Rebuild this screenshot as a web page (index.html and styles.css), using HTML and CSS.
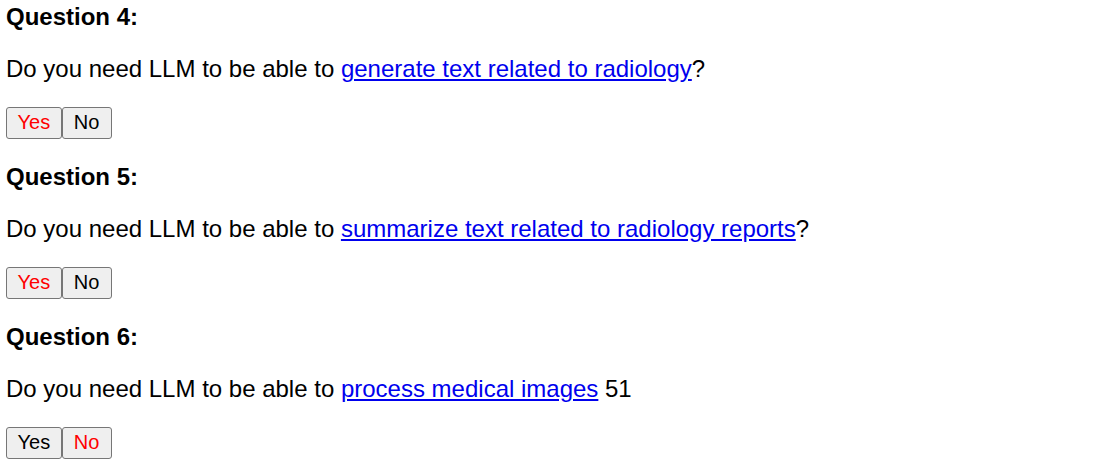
FILE: index.html
```html
<!DOCTYPE html>
<html>
<head>
<meta charset="utf-8">
<link rel="stylesheet" href="styles.css">
</head>
<body>
<div class="quiz">
  <section class="question">
    <p class="title">Question 4:</p>
    <p class="text">Do you need LLM to be able to <a href="#">generate text related to radiology</a>?</p>
    <div class="answers"><button class="btn selected">Yes</button><button class="btn">No</button></div>
  </section>
  <section class="question">
    <p class="title">Question 5:</p>
    <p class="text">Do you need LLM to be able to <a href="#">summarize text related to radiology reports</a>?</p>
    <div class="answers"><button class="btn selected">Yes</button><button class="btn">No</button></div>
  </section>
  <section class="question">
    <p class="title">Question 6:</p>
    <p class="text">Do you need LLM to be able to <a href="#">process medical images</a> 51</p>
    <div class="answers"><button class="btn">Yes</button><button class="btn selected">No</button></div>
  </section>
</div>
</body>
</html>
```

FILE: styles.css
```css
html, body {
  margin: 0;
  background: #fff;
}
body {
  font-family: "Liberation Sans", Arial, sans-serif;
  font-size: 24px;
  color: #000;
}
.quiz {
  padding: 3px 6px 0;
}
.question p {
  margin: 0 0 24px;
}
.title {
  font-weight: bold;
}
.text a {
  color: #0000ee;
  text-decoration: underline;
}
.answers {
  display: flex;
  margin: 0 0 24px;
}
.btn {
  font-family: "Liberation Sans", Arial, sans-serif;
  font-size: 20px;
  line-height: 23px;
  color: #000;
  background: #efefef;
  border: 1px solid #767676;
  border-radius: 3px;
  padding: 3px 10.5px 4px;
  min-width: 50px;
  margin: 0;
}
.btn.selected {
  color: #ff0000;
}
```
